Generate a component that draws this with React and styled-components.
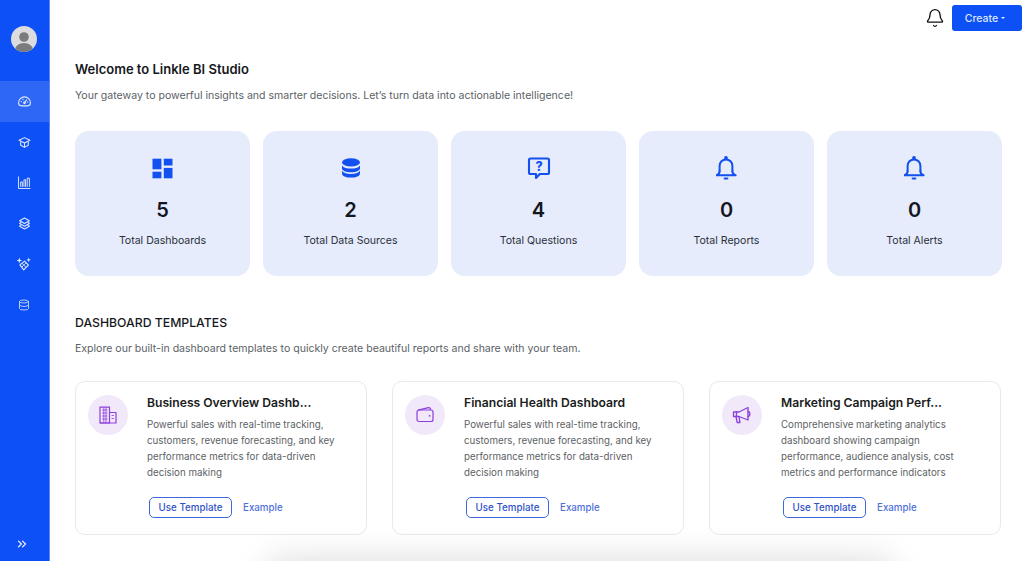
import React from "react";
import styled, { createGlobalStyle } from "styled-components";
import { ChevronsRight, Bell, Database } from "lucide-react";

const Global = createGlobalStyle`
  html, body { margin: 0; padding: 0; height: 100%; background: #fff; overflow: hidden; }
  body { font-family: Inter, "Liberation Sans", sans-serif; }
  * { box-sizing: border-box; }
`;

const Page = styled.div`
  display: flex;
  width: 1024px;
  height: 561px;
  overflow: hidden;
  position: relative;
`;

const Sidebar = styled.aside`
  width: 49.5px;
  flex: none;
  background: #0d50f5;
  border-right: 1px solid #5c86f5;
  display: flex;
  flex-direction: column;
  align-items: stretch;
`;

const AvatarWrap = styled.div`
  display: flex;
  justify-content: center;
  padding: 26px 0 29px;
`;

const Nav = styled.nav`
  display: flex;
  flex-direction: column;
`;

const NavItem = styled.div`
  height: 40.7px;
  display: flex;
  align-items: center;
  justify-content: center;
  color: #dfe7fd;
  background: ${(p) => (p.$active ? "#2e66f6" : "transparent")};
`;

const Collapse = styled.div`
  margin-top: auto;
  height: 37px;
  padding: 3px 5px 0 0;
  display: flex;
  align-items: center;
  justify-content: center;
  color: #eef3ff;
`;

const Main = styled.main`
  flex: 1;
  min-width: 0;
  display: flex;
  flex-direction: column;
`;

const Header = styled.header`
  display: flex;
  justify-content: flex-end;
  align-items: center;
  gap: 5px;
  padding: 5px 2px 0 0;
  height: 31px;
`;

const BellBtn = styled.div`
  width: 24px;
  height: 26px;
  display: flex;
  align-items: center;
  justify-content: center;
  color: #111;
`;

const CreateBtn = styled.button`
  width: 70px;
  height: 26px;
  border: none;
  border-radius: 3px;
  background: #0d50f5;
  color: #dfe8ff;
  font: 500 10.5px Inter, sans-serif;
  display: flex;
  align-items: center;
  justify-content: center;
  gap: 3px;
  padding: 0 4px 0 0;
`;

const Caret = styled.span`
  width: 0;
  height: 0;
  border-left: 2.5px solid transparent;
  border-right: 2.5px solid transparent;
  border-top: 2.5px solid #e8eeff;
`;

const Content = styled.div`
  padding: 30px 22px 0 25.5px;
`;

const Title = styled.h1`
  margin: 0;
  font-size: 13px;
  line-height: 16px;
  font-weight: 600;
  color: #16181d;
`;

const Subtitle = styled.p`
  margin: 12px 0 0;
  font-size: 10.55px;
  line-height: 14px;
  color: #5b5f66;
`;

const Stats = styled.div`
  display: grid;
  grid-template-columns: repeat(5, 175px);
  column-gap: 13px;
  margin-top: 28px;
`;

const StatCard = styled.div`
  height: 145px;
  background: #e6ecfc;
  border-radius: 14px;
  display: flex;
  flex-direction: column;
  align-items: center;
  padding-top: 24px;
  color: #1350f0;
`;

const StatIcon = styled.div`
  height: 26px;
  display: flex;
  align-items: center;
  justify-content: center;
`;

const StatValue = styled.div`
  margin-top: 17px;
  font-size: 20px;
  line-height: 24px;
  font-weight: 600;
  color: #14171f;
`;

const StatLabel = styled.div`
  margin-top: 12px;
  font-size: 10.55px;
  line-height: 14px;
  color: #2a2f3a;
`;

const SectionTitle = styled.h2`
  margin: 39px 0 0;
  font-size: 12.25px;
  line-height: 15px;
  font-weight: 500;
  color: #16181d;
`;

const SectionSub = styled.p`
  margin: 12px 0 0;
  font-size: 10.56px;
  line-height: 14px;
  color: #5b5f66;
`;

const Templates = styled.div`
  display: grid;
  grid-template-columns: repeat(3, 292px);
  column-gap: 25px;
  margin-top: 25px;
`;

const TemplateCard = styled.div`
  height: 154px;
  border: 1px solid #e9e9ec;
  border-radius: 10px;
  background: #fff;
  padding: 13px 12px 0 12px;
  display: flex;
  gap: 19px;
`;

const Circle = styled.div`
  width: 40px;
  height: 40px;
  flex: none;
  border-radius: 50%;
  background: #f1e9fa;
  color: #8b3fdc;
  display: flex;
  align-items: center;
  justify-content: center;
`;

const Body = styled.div`
  flex: 1;
  min-width: 0;
`;

const CardTitle = styled.h3`
  margin: 0;
  font-size: 12.15px;
  line-height: 16px;
  font-weight: 600;
  color: #1a1c20;
`;

const CardText = styled.p`
  margin: 6px 0 0;
  font-size: 9.75px;
  line-height: 16px;
  color: #5c5f65;
  white-space: pre-line;
`;

const Actions = styled.div`
  display: flex;
  align-items: center;
  gap: 11px;
  margin-top: 16px;
  margin-left: 2px;
`;

const OutlineBtn = styled.button`
  width: 83px;
  height: 20.5px;
  border: 1px solid #4068dc;
  border-radius: 5px;
  background: #fff;
  color: #2f52c8;
  font: 500 9.75px Inter, sans-serif;
  padding: 0;
`;

const ExampleLink = styled.span`
  font-size: 9.75px;
  font-weight: 500;
  color: #4f70da;
`;

const Shadow = styled.div`
  position: absolute;
  left: 285px;
  width: 590px;
  top: 578px;
  height: 40px;
  box-shadow: 0 0 36px 16px rgba(0, 0, 0, 0.16);
`;

const DashIcon = () => (
  <svg width="21" height="21" viewBox="0 0 21 21" fill="currentColor">
    <rect x="0.5" y="0.7" width="8.9" height="10.6" />
    <rect x="11.8" y="0.7" width="8.7" height="6.8" />
    <rect x="0.5" y="13.7" width="8.9" height="6.6" />
    <rect x="11.8" y="9.9" width="8.7" height="10.4" />
  </svg>
);

const DbIcon = () => (
  <svg width="20" height="20" viewBox="0 0 20 20" fill="currentColor">
    <ellipse cx="10" cy="4.4" rx="9" ry="4.2" />
    <path d="M1 7.4C2.5 9.8 6 10.6 10 10.6S17.5 9.8 19 7.4V10.4C19 12.4 15 14.2 10 14.2S1 12.4 1 10.4Z" />
    <path d="M1 12.8C2.5 15.2 6 16 10 16S17.5 15.2 19 12.8V15.4C19 17.8 15 19.6 10 19.6S1 17.8 1 15.4Z" />
  </svg>
);

const QuestionIcon = () => (
  <svg width="24" height="24" viewBox="0 0 24 24" fill="none" stroke="currentColor" strokeWidth="2.1" strokeLinejoin="round">
    <path d="M3.5 2.5H20.5A1.5 1.5 0 0 1 22 4V16.5A1.5 1.5 0 0 1 20.5 18H12.8L9 22V18H3.5A1.5 1.5 0 0 1 2 16.5V4A1.5 1.5 0 0 1 3.5 2.5Z" />
    <text x="12" y="14.8" textAnchor="middle" fontFamily="Inter, sans-serif" fontSize="12.5" fontWeight="800" fill="currentColor" stroke="none">?</text>
  </svg>
);

const BellOutline = () => (
  <svg width="22" height="24" viewBox="1 0 22 24" fill="none" stroke="currentColor" strokeWidth="2" strokeLinecap="round" strokeLinejoin="round">
    <circle cx="11" cy="1.9" r="0.9" fill="currentColor" />
    <path d="M4.6 15V10C4.6 6.2 7.4 3.4 11 3.4S17.4 6.2 17.4 10V15" />
    <path d="M1.4 19.2C3.6 18.8 4.6 17.4 4.6 15M20.6 19.2C18.4 18.8 17.4 17.4 17.4 15M1.4 19.2H20.6" />
    <path d="M9.6 22.6H12.4" />
  </svg>
);

const BuildingIcon = () => (
  <svg width="18" height="18" viewBox="0 0 18 18" fill="none" stroke="currentColor" strokeWidth="1.2" strokeLinejoin="round">
    <path d="M1 17V1.2H10.5V17Z" />
    <path d="M10.5 6.5H17V17H1" />
    <path d="M3 4H8.5M3 7H8.5M3 10H8.5M3 13H8.5M4.8 1.5V16.5M7 1.5V16.5M12.5 9.5H15M12.5 12.5H15" strokeWidth="0.8" />
  </svg>
);

const WalletIcon = () => (
  <svg width="18" height="18" viewBox="0 0 18 18" fill="none" stroke="currentColor" strokeWidth="1.2" strokeLinejoin="round">
    <rect x="1" y="4" width="16" height="11.5" rx="2" />
    <path d="M2 4.2L12.5 1.6C13.5 1.4 14.5 2.2 14.5 3.4V4" />
    <circle cx="13.6" cy="9.8" r="0.9" fill="currentColor" stroke="none" />
  </svg>
);

const MegaphoneIcon = () => (
  <svg width="20" height="20" viewBox="0 0 20 20" fill="none" stroke="currentColor" strokeWidth="1.3" strokeLinejoin="round" strokeLinecap="round">
    <path d="M1.5 7H7L16 2.5V15L7 11.5H1.5Z" />
    <path d="M4.5 7V11.5M16 6.5C18.4 6.5 18.4 11.5 16 11.5" />
    <path d="M4 11.5L5.2 17.5H8L7 11.7" />
  </svg>
);

const GraduateBox = () => (
  <svg width="13" height="13" viewBox="0 0 24 24" fill="none" stroke="currentColor" strokeWidth="2" strokeLinejoin="round">
    <path d="M12 3L22 8L12 13L2 8Z" />
    <path d="M5 10V17L12 21L19 17V10M12 13V21" />
  </svg>
);

const GaugeIcon = () => (
  <svg width="13" height="13" viewBox="0 0 24 24" fill="none" stroke="currentColor" strokeWidth="2" strokeLinecap="round" strokeLinejoin="round">
    <path d="M6 20H18C21 20 23 17.5 23 14.5C23 8.5 18 3.5 12 3.5S1 8.5 1 14.5C1 17.5 3 20 6 20Z" />
    <path d="M12 14L16 9M6 12H6.5M17.5 13H18M9 8H9.5" />
    <circle cx="12" cy="14.5" r="1.5" />
  </svg>
);

const BarsIcon = () => (
  <svg width="13" height="13" viewBox="0 0 24 24" fill="none" stroke="currentColor" strokeWidth="1.8">
    <path d="M1 1V23H23" />
    <path d="M5 20V11H8V20M11 20V7H14V20M17 20V4H21V20" />
  </svg>
);

const StackIcon = () => (
  <svg width="13" height="13" viewBox="0 0 24 24" fill="none" stroke="currentColor" strokeWidth="2" strokeLinejoin="round">
    <path d="M12 2L21 7L12 12L3 7Z" />
    <path d="M6 9.5L3 12L12 17L21 12L18 9.5" />
    <path d="M6 14.5L3 17L12 22L21 17L18 14.5" />
  </svg>
);

const SparkIcon = () => (
  <svg width="14" height="14" viewBox="0 0 24 24" fill="none" stroke="currentColor" strokeWidth="2" strokeLinejoin="round">
    <path d="M13 7L5 13.5L11.5 22L19.5 14Z" />
    <path d="M8.5 10.5L15.5 18M15.5 10L8 17.5" strokeWidth="1.6" />
    <path d="M4 1L5.3 4.7L9 6L5.3 7.3L4 11L2.7 7.3L-1 6L2.7 4.7Z" fill="currentColor" stroke="none" />
    <path d="M20 1L21 4L24 5L21 6L20 9L19 6L16 5L19 4Z" fill="currentColor" stroke="none" />
  </svg>
);

const Avatar = () => (
  <svg width="26" height="26" viewBox="0 0 26 26">
    <defs>
      <clipPath id="av"><circle cx="13" cy="13" r="13" /></clipPath>
    </defs>
    <circle cx="13" cy="13" r="13" fill="#dcdcde" />
    <g clipPath="url(#av)" fill="#7b7b7e">
      <circle cx="13" cy="11" r="4.8" />
      <ellipse cx="13" cy="24" rx="9" ry="7" />
    </g>
  </svg>
);

const stats = [
  { icon: <DashIcon />, value: 5, label: "Total Dashboards" },
  { icon: <DbIcon />, value: 2, label: "Total Data Sources" },
  { icon: <QuestionIcon />, value: 4, label: "Total Questions" },
  { icon: <BellOutline />, value: 0, label: "Total Reports" },
  { icon: <BellOutline />, value: 0, label: "Total Alerts" },
];

const templates = [
  {
    icon: <BuildingIcon />,
    title: "Business Overview Dashb...",
    text: "Powerful sales with real-time tracking,\ncustomers, revenue forecasting, and key\nperformance metrics for data-driven\ndecision making",
  },
  {
    icon: <WalletIcon />,
    title: "Financial Health Dashboard",
    text: "Powerful sales with real-time tracking,\ncustomers, revenue forecasting, and key\nperformance metrics for data-driven\ndecision making",
  },
  {
    icon: <MegaphoneIcon />,
    title: "Marketing Campaign Perf...",
    text: "Comprehensive marketing analytics\ndashboard showing campaign\nperformance, audience analysis, cost\nmetrics and performance indicators",
  },
];

export default function App() {
  return (
    <Page>
      <Global />
      <Sidebar>
        <AvatarWrap><Avatar /></AvatarWrap>
        <Nav>
          <NavItem $active><GaugeIcon /></NavItem>
          <NavItem><GraduateBox /></NavItem>
          <NavItem><BarsIcon /></NavItem>
          <NavItem><StackIcon /></NavItem>
          <NavItem><SparkIcon /></NavItem>
          <NavItem><Database size={12} strokeWidth={1.6} /></NavItem>
        </Nav>
        <Collapse><ChevronsRight size={14} strokeWidth={2.2} /></Collapse>
      </Sidebar>
      <Main>
        <Header>
          <BellBtn><Bell size={20} strokeWidth={1.6} /></BellBtn>
          <CreateBtn>Create <Caret /></CreateBtn>
        </Header>
        <Content>
          <Title>Welcome to Linkle BI Studio</Title>
          <Subtitle>Your gateway to powerful insights and smarter decisions. Let’s turn data into actionable intelligence!</Subtitle>
          <Stats>
            {stats.map((s) => (
              <StatCard key={s.label}>
                <StatIcon>{s.icon}</StatIcon>
                <StatValue>{s.value}</StatValue>
                <StatLabel>{s.label}</StatLabel>
              </StatCard>
            ))}
          </Stats>
          <SectionTitle>DASHBOARD TEMPLATES</SectionTitle>
          <SectionSub>Explore our built-in dashboard templates to quickly create beautiful reports and share with your team.</SectionSub>
          <Templates>
            {templates.map((t) => (
              <TemplateCard key={t.title}>
                <Circle>{t.icon}</Circle>
                <Body>
                  <CardTitle>{t.title}</CardTitle>
                  <CardText>{t.text}</CardText>
                  <Actions>
                    <OutlineBtn>Use Template</OutlineBtn>
                    <ExampleLink>Example</ExampleLink>
                  </Actions>
                </Body>
              </TemplateCard>
            ))}
          </Templates>
        </Content>
      </Main>
      <Shadow />
    </Page>
  );
}
